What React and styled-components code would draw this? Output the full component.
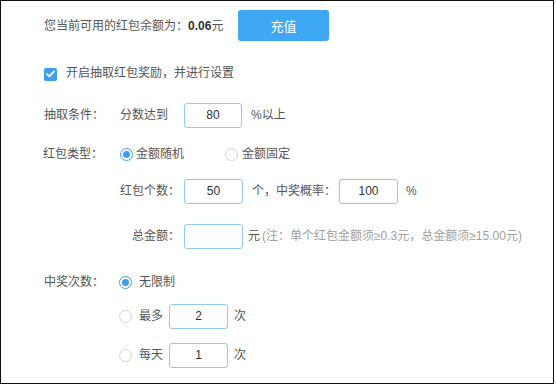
import React from 'react'
import styled, { createGlobalStyle } from 'styled-components'

const GlobalStyle = createGlobalStyle`
    html, body {
        margin: 0;
        padding: 0;
        background: #fff;
    }
    body {
        font-family: "Liberation Sans", "Noto Sans CJK SC", sans-serif;
        font-size: 12px;
        color: #555;
    }
`

const Frame = styled.div`
    width: 554px;
    height: 384px;
    box-sizing: border-box;
    border: 1px solid #111;
    padding-top: 9px;
    background: #fff;
    overflow: hidden;
`

const Row = styled.div`
    display: flex;
    align-items: center;
    height: ${p => p.$h || 26}px;
    margin-top: ${p => p.$mt || 0}px;
    padding-left: ${p => p.$indent || 0}px;
    white-space: nowrap;
    line-height: 16px;
`

const Text = styled.span`
    display: inline-block;
    width: ${p => (p.$w ? `${p.$w}px` : 'auto')};
    flex: none;
    text-align: ${p => p.$align || 'left'};
    padding-right: ${p => p.$pr || 0}px;
    box-sizing: border-box;
    margin-left: ${p => p.$ml || 0}px;
    color: ${p => p.$muted ? '#a0a0a0' : '#555'};
`

const Amount = styled.b`
    color: #333;
    font-weight: bold;
`

const Button = styled.button`
    width: 91px;
    height: 31px;
    border: none;
    border-radius: 3px;
    background: #3fa8f4;
    color: #fff;
    font-family: "Liberation Sans", "Noto Sans CJK SC", sans-serif;
    font-size: 13px;
    padding: 0;
    cursor: pointer;
`

const Check = styled.span`
    width: 13px;
    height: 13px;
    border-radius: 2px;
    background: #3d9ef0;
    display: inline-flex;
    align-items: center;
    justify-content: center;
    flex: none;
    margin-right: 9px;
    margin-top: 2px;
`

const Radio = styled.span`
    width: 13px;
    height: 13px;
    box-sizing: border-box;
    border-radius: 50%;
    border: 1px solid ${p => (p.$on ? '#3d9ef0' : '#d4d4d4')};
    background: #fff;
    display: inline-flex;
    align-items: center;
    justify-content: center;
    flex: none;
    margin-right: ${p => p.$gap || 3}px;
    &::after {
        content: '';
        width: 7px;
        height: 7px;
        border-radius: 50%;
        background: ${p => (p.$on ? '#3d9ef0' : 'transparent')};
    }
`

const Option = styled.label`
    display: inline-flex;
    align-items: center;
    width: ${p => (p.$w ? `${p.$w}px` : 'auto')};
    flex: none;
`

const Input = styled.input`
    width: ${p => p.$w || 59}px;
    height: 25px;
    box-sizing: border-box;
    border: 1px solid #93c8f0;
    border-radius: 3px;
    text-align: center;
    font-family: "Liberation Sans", "Noto Sans CJK SC", sans-serif;
    font-size: 12px;
    color: #333;
    padding: 0;
    margin-left: ${p => p.$ml || 0}px;
    flex: none;
    outline: none;
`

const Field = ({ value, w, ml }) => (
    <Input $w={w} $ml={ml} defaultValue={value} />
)

export default function App() {
    return (
        <>
            <GlobalStyle />
            <Frame>
                <Row $h={31} $indent={43}>
                    <Text $w={194}>您当前可用的红包余额为：<Amount>0.06</Amount>元</Text>
                    <Button>充值</Button>
                </Row>

                <Row $mt={19} $indent={43}>
                    <Check>
                        <svg width="9" height="8" viewBox="0 0 9 8">
                            <path d="M1 4.2 L3.4 6.4 L8 1.4" fill="none" stroke="#fff" strokeWidth="1.8" strokeLinecap="round" strokeLinejoin="round" />
                        </svg>
                    </Check>
                    <Text>开启抽取红包奖励，并进行设置</Text>
                </Row>

                <Row $mt={16} $indent={43}>
                    <Text $w={76}>抽取条件：</Text>
                    <Text $w={64}>分数达到</Text>
                    <Field value="80" w={58} />
                    <Text $ml={9}>%以上</Text>
                </Row>

                <Row $mt={13} $indent={42}>
                    <Text $w={77}>红包类型：</Text>
                    <Option $w={105}><Radio $on />金额随机</Option>
                    <Option><Radio $gap={4} />金额固定</Option>
                </Row>

                <Row $mt={11} $indent={119}>
                    <Text $w={64} $align="right" $pr={4}>红包个数：</Text>
                    <Field value="50" />
                    <Text $ml={9}>个</Text>
                    <Text $w={75} $align="right" $pr={4}>，中奖概率：</Text>
                    <Field value="100" />
                    <Text $ml={8}>%</Text>
                </Row>

                <Row $mt={19} $indent={119}>
                    <Text $w={64} $align="right" $pr={4}>总金额：</Text>
                    <Field value="" />
                    <Text $ml={5}>元</Text>
                    <Text $ml={2} $muted>(注：单个红包金额须≥0.3元，总金额须≥15.00元)</Text>
                </Row>

                <Row $mt={20} $indent={43}>
                    <Text $w={75}>中奖次数：</Text>
                    <Option><Radio $on $gap={7} />无限制</Option>
                </Row>

                <Row $mt={8} $indent={118}>
                    <Option><Radio $gap={7} />最多</Option>
                    <Field value="2" ml={6} />
                    <Text $ml={6}>次</Text>
                </Row>

                <Row $mt={13} $indent={118}>
                    <Option><Radio $gap={7} />每天</Option>
                    <Field value="1" ml={6} />
                    <Text $ml={6}>次</Text>
                </Row>
            </Frame>
        </>
    )
}
